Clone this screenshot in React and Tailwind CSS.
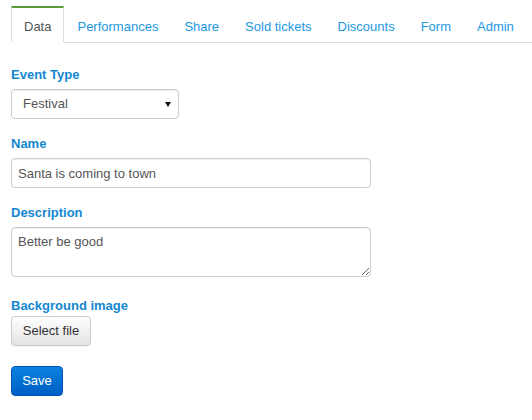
import React from "react";

const tabs = ["Data", "Performances", "Share", "Sold tickets", "Discounts", "Form", "Admin"];

const labelCls = "block text-[13px] leading-[18px] font-bold text-[#1487d0]";
const fieldCls =
  "block border border-[#cccccc] rounded-[4px] bg-white text-[13px] text-[#555555] shadow-[inset_0_1px_1px_rgba(0,0,0,0.075)] outline-none";

export default function App() {
  return (
    <div className="bg-white min-h-[420px] w-[532px] font-['Liberation_Sans',Arial,sans-serif]">
      {/* Tabs */}
      <ul className="flex ml-[11px] pt-[6px] border-b border-[#dddddd]">
        {tabs.map((t, i) => (
          <li key={t} className="-mb-px">
            <a
              href="#"
              className={`block px-3 pt-[10px] pb-[6px] text-[13px] leading-[18px] border border-t-2 ${
                i === 0
                  ? "border-[#dddddd] border-t-[#5a9b3c] border-b-white bg-white text-[#555555]"
                  : "border-transparent text-[#2198df]"
              }`}
            >
              {t}
            </a>
          </li>
        ))}
      </ul>

      {/* Form */}
      <form className="px-[11px] pt-[23px]" onSubmit={(e) => e.preventDefault()}>
        <div className="mb-4">
          <label className={`${labelCls} mb-[5px]`}>Event Type</label>
          <div className="relative w-[168px]">
            <select
              defaultValue="Festival"
              className={`${fieldCls} appearance-none w-[168px] h-[30px] pl-[11px] pr-6`}
            >
              <option>Festival</option>
              <option>Concert</option>
              <option>Theatre</option>
            </select>
            <svg
              className="absolute right-[8px] top-[13px] pointer-events-none"
              width="6"
              height="5"
              viewBox="0 0 6 5"
            >
              <path d="M0 0H6L3 5Z" fill="#111" />
            </svg>
          </div>
        </div>

        <div className="mb-4">
          <label className={`${labelCls} mb-[5px]`}>Name</label>
          <input
            type="text"
            defaultValue="Santa is coming to town"
            className={`${fieldCls} w-[360px] h-[30px] px-[6px]`}
          />
        </div>

        <div className="mb-[20px]">
          <label className={`${labelCls} mb-[5px]`}>Description</label>
          <textarea
            defaultValue="Better be good"
            className={`${fieldCls} w-[360px] h-[50px] px-[6px] pt-[5px] leading-[18px]`}
          />
        </div>

        <div className="mb-[20px]">
          <label className={`${labelCls} mb-px`}>Background image</label>
          <button
            type="button"
            className="block w-[80px] h-[30px] text-[13px] text-[#333333] border border-[#cccccc] rounded-[4px] bg-gradient-to-b from-white to-[#e3e3e3] shadow-[0_1px_1px_rgba(0,0,0,0.05)]"
          >
            Select file
          </button>
        </div>

        <button
          type="submit"
          className="block w-[52px] h-[30px] text-[13px] text-white border border-[#0055b0] rounded-[4px] bg-gradient-to-b from-[#0d82e0] to-[#005ec4]"
        >
          Save
        </button>
      </form>
    </div>
  );
}
